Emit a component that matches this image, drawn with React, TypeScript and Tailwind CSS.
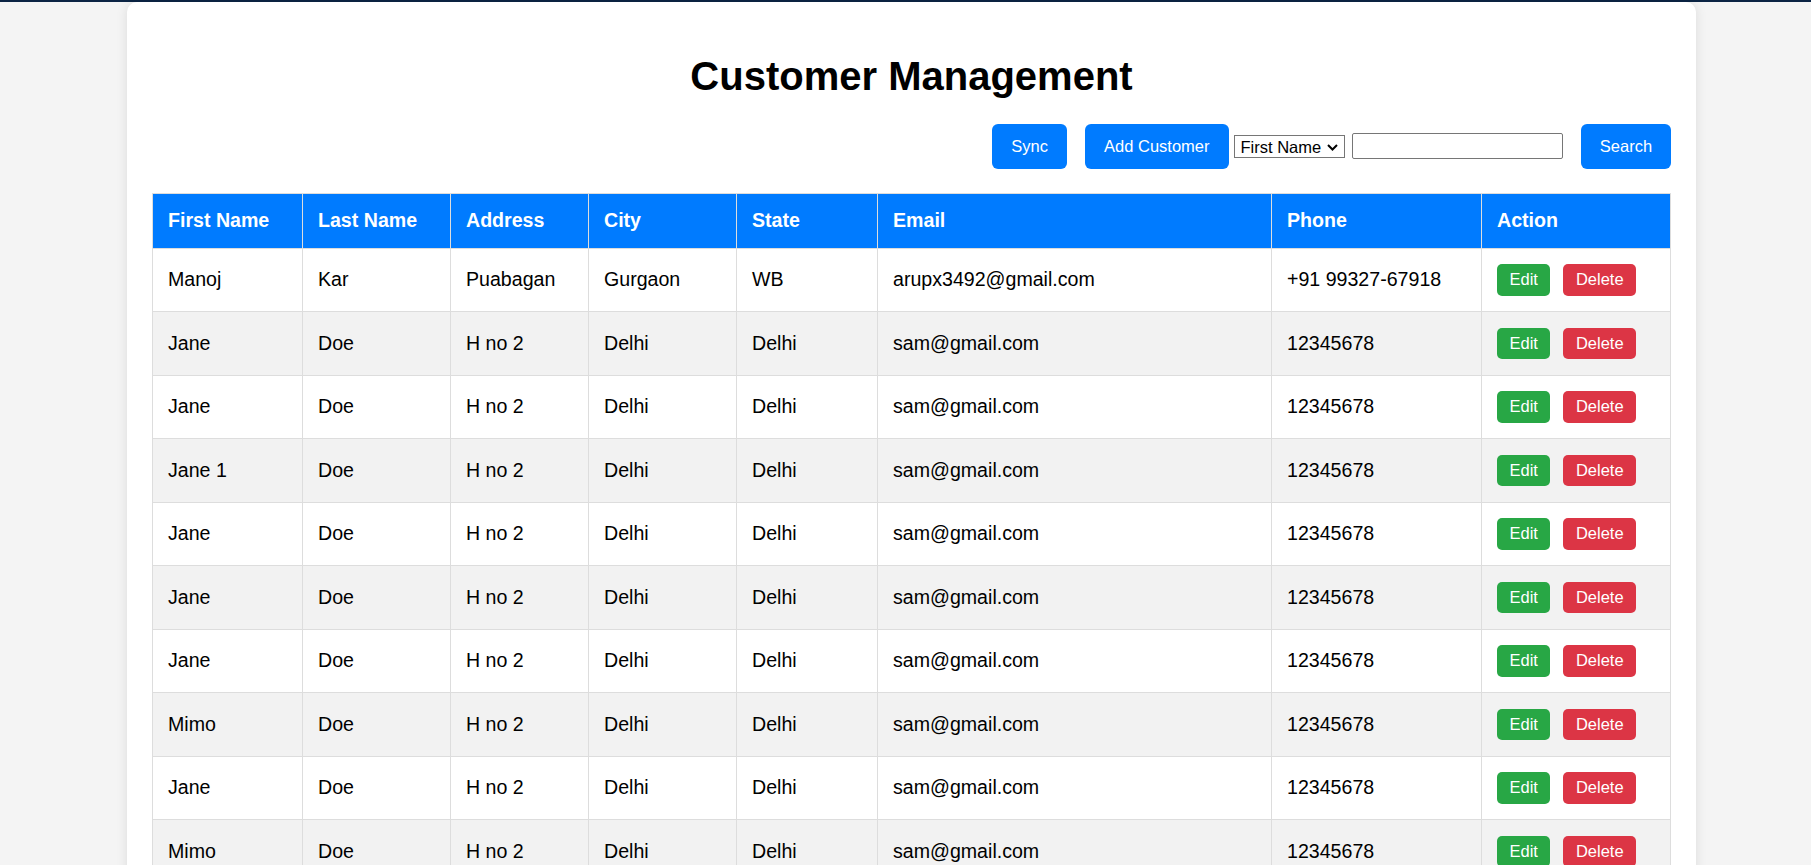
import React from "react";

type Customer = {
  first: string;
  last: string;
  address: string;
  city: string;
  state: string;
  email: string;
  phone: string;
};

const customers: Customer[] = [
  { first: "Manoj", last: "Kar", address: "Puabagan", city: "Gurgaon", state: "WB", email: "arupx3492@gmail.com", phone: "+91 99327-67918" },
  { first: "Jane", last: "Doe", address: "H no 2", city: "Delhi", state: "Delhi", email: "sam@gmail.com", phone: "12345678" },
  { first: "Jane", last: "Doe", address: "H no 2", city: "Delhi", state: "Delhi", email: "sam@gmail.com", phone: "12345678" },
  { first: "Jane 1", last: "Doe", address: "H no 2", city: "Delhi", state: "Delhi", email: "sam@gmail.com", phone: "12345678" },
  { first: "Jane", last: "Doe", address: "H no 2", city: "Delhi", state: "Delhi", email: "sam@gmail.com", phone: "12345678" },
  { first: "Jane", last: "Doe", address: "H no 2", city: "Delhi", state: "Delhi", email: "sam@gmail.com", phone: "12345678" },
  { first: "Jane", last: "Doe", address: "H no 2", city: "Delhi", state: "Delhi", email: "sam@gmail.com", phone: "12345678" },
  { first: "Mimo", last: "Doe", address: "H no 2", city: "Delhi", state: "Delhi", email: "sam@gmail.com", phone: "12345678" },
  { first: "Jane", last: "Doe", address: "H no 2", city: "Delhi", state: "Delhi", email: "sam@gmail.com", phone: "12345678" },
  { first: "Mimo", last: "Doe", address: "H no 2", city: "Delhi", state: "Delhi", email: "sam@gmail.com", phone: "12345678" },
];

const columns = [
  { label: "First Name", width: "w-[150px]" },
  { label: "Last Name", width: "w-[148px]" },
  { label: "Address", width: "w-[138px]" },
  { label: "City", width: "w-[148px]" },
  { label: "State", width: "w-[141px]" },
  { label: "Email", width: "w-[394px]" },
  { label: "Phone", width: "w-[210px]" },
  { label: "Action", width: "w-[189px]" },
];

const td = "border border-[#dddddd] px-[15px] h-[63.5px] align-middle text-left";

export default function App() {
  return (
    <div className="min-h-screen bg-[#f4f4f4] font-['Liberation_Sans',Arial,sans-serif] text-black">
      <div className="h-[2px] bg-[#0b2444]" />
      <div className="ml-[127px] w-[1569px] rounded-[10px] bg-white px-[25px] pt-[25px] pb-[25px] shadow-[0_0_12px_rgba(0,0,0,0.1)]">
        <h1 className="mt-[26px] text-center text-[40px] font-bold leading-[46px]">
          Customer Management
        </h1>

        <div className="mt-[25px] flex items-center justify-end">
          <button className="h-[44.5px] rounded-[6px] bg-[#007bff] px-[19px] text-[16.5px] text-white">
            Sync
          </button>
          <button className="ml-[18px] h-[44.5px] rounded-[6px] bg-[#007bff] px-[19px] text-[16.5px] text-white">
            Add Customer
          </button>
          <div className="relative ml-[5px] h-[23px] w-[111px] border border-[#767676] bg-white">
            <select className="h-full w-full appearance-none pl-[6px] text-[16.5px] leading-[21px] outline-none">
              <option>First Name</option>
              <option>Last Name</option>
              <option>City</option>
              <option>Email</option>
            </select>
            <svg
              className="pointer-events-none absolute right-[6px] top-[8px]"
              width="11"
              height="7"
              viewBox="0 0 11 7"
            >
              <path d="M1 1l4.5 4.5L10 1" fill="none" stroke="#000" strokeWidth="2" />
            </svg>
          </div>
          <input
            type="text"
            className="ml-[7px] h-[26px] w-[211px] rounded-[2px] border border-[#767676] bg-white px-[3px] text-[16.5px] outline-none"
          />
          <button className="ml-[18.5px] h-[44.5px] w-[90px] rounded-[6px] bg-[#007bff] text-[16.5px] text-white">
            Search
          </button>
        </div>

        <table className="mt-[24.5px] w-[1518px] table-fixed border-collapse text-[19.6px]">
          <colgroup>
            {columns.map((c) => (
              <col key={c.label} className={c.width} />
            ))}
          </colgroup>
          <thead>
            <tr className="bg-[#007bff] text-white">
              {columns.map((c) => (
                <th
                  key={c.label}
                  className="h-[54.5px] border border-[#dddddd] px-[15px] text-left align-middle font-bold"
                >
                  {c.label}
                </th>
              ))}
            </tr>
          </thead>
          <tbody>
            {customers.map((c, i) => (
              <tr key={i} className="even:bg-[#f2f2f2]">
                <td className={td}>{c.first}</td>
                <td className={td}>{c.last}</td>
                <td className={td}>{c.address}</td>
                <td className={td}>{c.city}</td>
                <td className={td}>{c.state}</td>
                <td className={td}>{c.email}</td>
                <td className={td}>{c.phone}</td>
                <td className={td}>
                  <div className="flex gap-[13px]">
                    <button className="h-[31.5px] rounded-[5px] bg-[#28a745] px-[12.5px] text-[16.5px] text-white">
                      Edit
                    </button>
                    <button className="h-[31.5px] rounded-[5px] bg-[#dc3545] px-[12.5px] text-[16.5px] text-white">
                      Delete
                    </button>
                  </div>
                </td>
              </tr>
            ))}
          </tbody>
        </table>
      </div>
    </div>
  );
}
